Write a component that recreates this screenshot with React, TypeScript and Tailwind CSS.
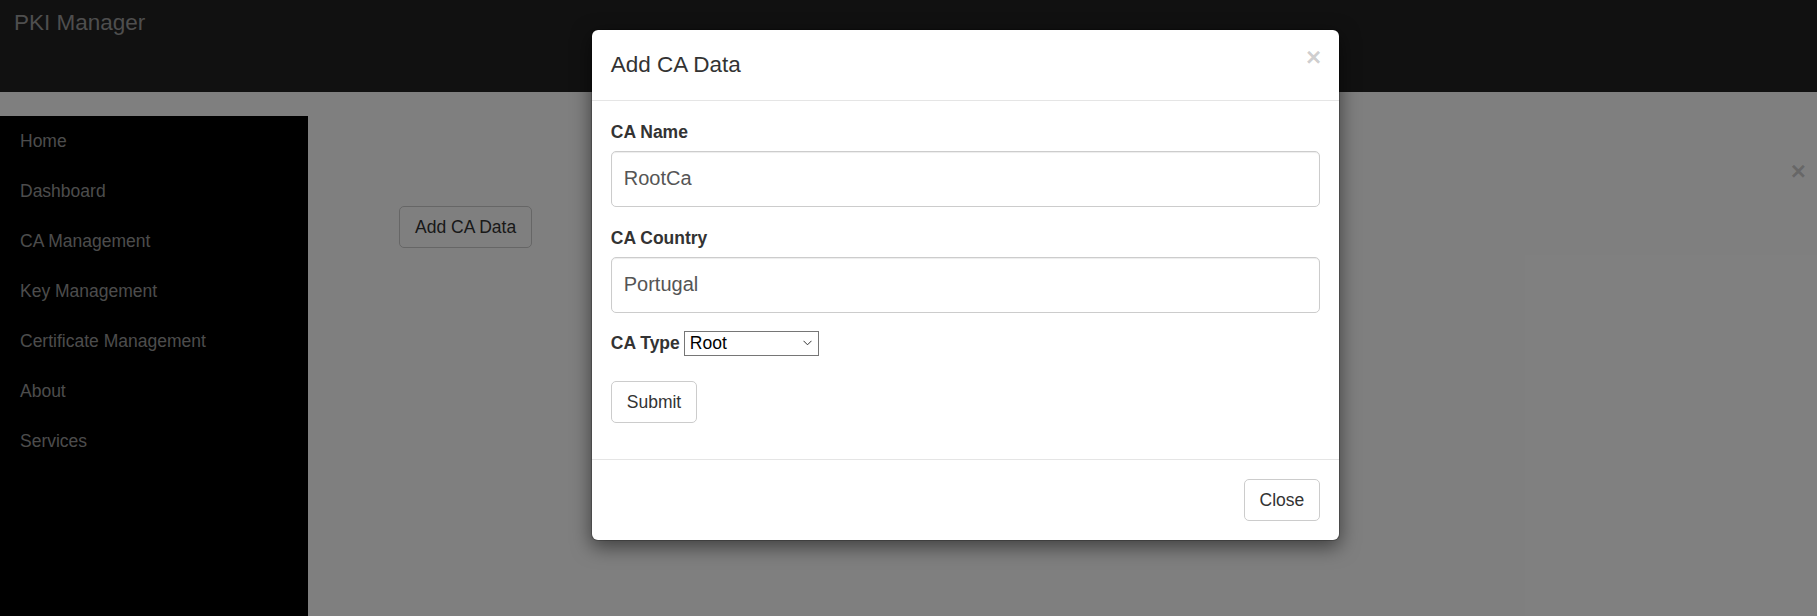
import React, { useState } from 'react'

const navItems = ['Home', 'Dashboard', 'CA Management', 'Key Management', 'Certificate Management', 'About', 'Services']

export default function App() {
  const [name, setName] = useState('RootCa')
  const [country, setCountry] = useState('Portugal')
  const [caType, setCaType] = useState('Root')

  return (
    <div className="relative h-screen overflow-hidden bg-white font-['Liberation_Sans',Arial,sans-serif] text-[17.5px] text-[#333]">
      <header className="h-[92px] bg-[#222] pl-[14px] pt-[10px]">
        <span className="text-[22.5px] leading-[26px] text-[#9d9d9d]">PKI Manager</span>
      </header>

      <div className="mt-6 flex h-[calc(100%-116px)]">
        <nav className="w-[308px] shrink-0 bg-black">
          {navItems.map(item => (
            <a key={item} href="#" className="flex h-[50px] items-center pl-[20px] text-[17.5px] text-[#999]">
              {item}
            </a>
          ))}
        </nav>

        <main className="relative flex-1 pl-[91px] pt-[90px]">
          <button className="h-[42px] rounded-[5px] border border-[#ccc] bg-white px-[15px] text-[17.5px] text-[#333]">
            Add CA Data
          </button>
          <button className="absolute right-[11px] top-[42px] text-[26px] font-bold leading-none text-black/20">
            ×
          </button>
        </main>
      </div>

      {/* backdrop */}
      <div className="absolute inset-0 bg-black/50" />

      {/* modal */}
      <div className="absolute left-[591px] top-[29px] w-[749px] rounded-[7px] border border-black/20 bg-white bg-clip-padding shadow-[0_6px_19px_rgba(0,0,0,0.5)]">
        <div className="flex items-start justify-between border-b border-[#e5e5e5] px-[18.75px] pt-[19px] pb-[19px]">
          <h4 className="text-[22.5px] leading-[32px] text-[#333]">Add CA Data</h4>
          <button className="-mr-[1px] -mt-[5px] text-[26px] font-bold leading-none text-black/20">×</button>
        </div>

        <div className="px-[18.75px] pt-[18.75px] pb-[36px]">
          <div className="mb-[18.75px]">
            <label className="mb-[6px] block font-bold leading-[25px]">CA Name</label>
            <input
              value={name}
              onChange={e => setName(e.target.value)}
              className="block h-[56px] w-full rounded-[5px] border border-[#ccc] px-[12px] text-[20px] text-[#555] shadow-[inset_0_1px_1px_rgba(0,0,0,0.075)] outline-none"
            />
          </div>
          <div className="mb-[18.75px]">
            <label className="mb-[6px] block font-bold leading-[25px]">CA Country</label>
            <input
              value={country}
              onChange={e => setCountry(e.target.value)}
              className="block h-[56px] w-full rounded-[5px] border border-[#ccc] px-[12px] text-[20px] text-[#555] shadow-[inset_0_1px_1px_rgba(0,0,0,0.075)] outline-none"
            />
          </div>
          <div className="flex h-[25px] items-center gap-[4px]">
            <label className="font-bold leading-[25px]">CA Type</label>
            <span className="relative inline-block">
              <select
                value={caType}
                onChange={e => setCaType(e.target.value)}
                className="block h-[25px] w-[135px] appearance-none border border-[#767676] bg-white pl-[5px] text-[17.5px] leading-[23px] text-black outline-none"
              >
                <option>Root</option>
                <option>Intermediate</option>
              </select>
              <svg className="pointer-events-none absolute right-[7px] top-[9px]" width="9" height="6" viewBox="0 0 9 6">
                <path d="M0.5 0.8 L4.5 4.8 L8.5 0.8" fill="none" stroke="#333" strokeWidth="1" />
              </svg>
            </span>
          </div>
          <button className="mt-[25px] h-[42px] rounded-[5px] border border-[#ccc] bg-white px-[15px] text-[17.5px] text-[#333]">
            Submit
          </button>
        </div>

        <div className="flex justify-end border-t border-[#e5e5e5] px-[18.75px] pt-[18.75px] pb-[19px]">
          <button className="h-[42px] rounded-[5px] border border-[#ccc] bg-white px-[15px] text-[17.5px] text-[#333]">
            Close
          </button>
        </div>
      </div>
    </div>
  )
}
